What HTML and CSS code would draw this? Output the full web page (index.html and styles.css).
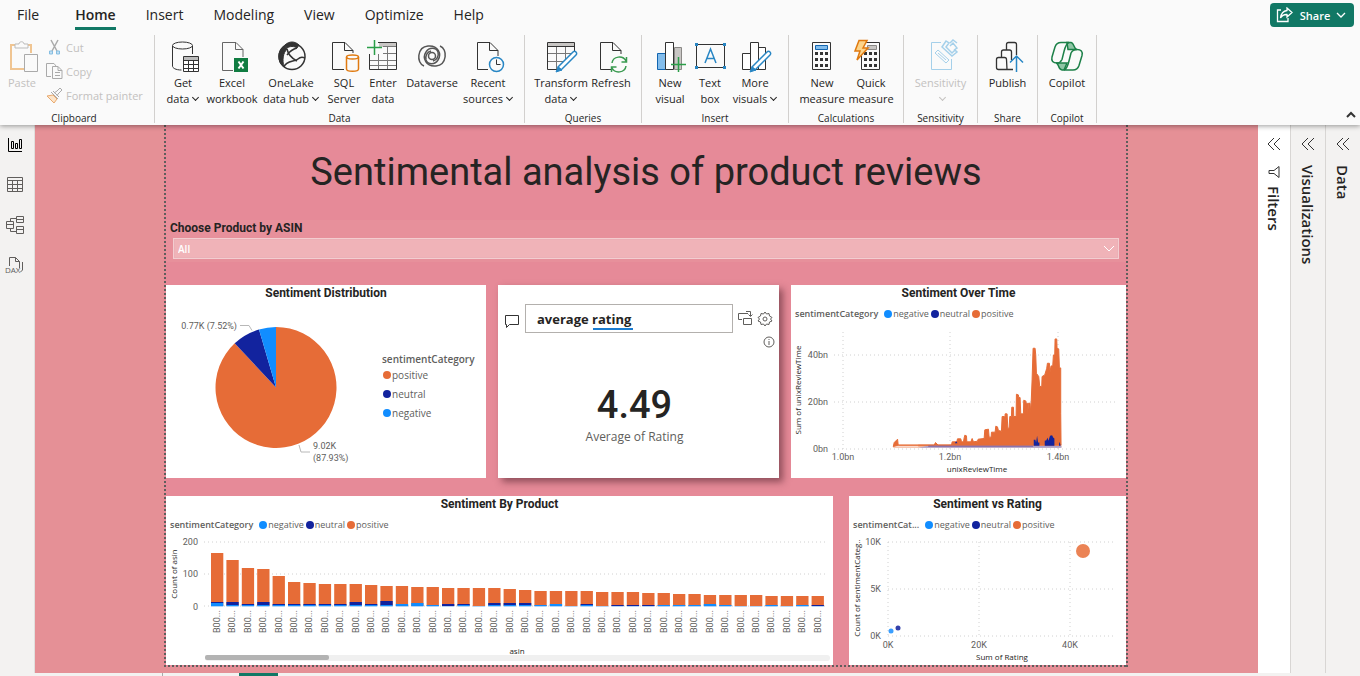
FILE: index.html
```html
<!DOCTYPE html>
<html lang="en">
<head>
<meta charset="utf-8">
<title>Sentimental analysis of product reviews</title>
<link rel="stylesheet" href="styles.css">
</head>
<body>
<header class="ribbon">
  <div class="tabbar">
    <nav class="tabs">
      <a href="#">File</a><a href="#" class="active">Home</a><a href="#">Insert</a><a href="#">Modeling</a><a href="#">View</a><a href="#">Optimize</a><a href="#">Help</a>
    </nav>
    <button class="share">
      <svg width="18" height="16" viewBox="0 0 18 16"><path d="M5 3H1.500v11.500H12V11"/><path d="M11 1l5 4.500-5 4.500V7.500C8 7.300 6 8.500 4.500 11 5 7 7.500 4 11 3.500z"/></svg>
      <span>Share</span>
      <svg width="10" height="8" viewBox="0 0 10 8"><path d="M1 2l4 4 4-4"/></svg>
    </button>
  </div>
  <div class="groups">
    <section class="group clipboard">
      <div class="tools">
        <button class="tool" disabled>
          <svg class="ico" viewBox="0 0 36 32"><path d="M14 4H7v24h13M21 4h6v8" stroke="#f0c592" stroke-width="2"/><path d="M11 7V3h4c0-3 5-3 5 0h4v4z" fill="#fafafa" stroke="#bbb"/><path d="M20.500 13.500h13v17h-13z" stroke="#aaa"/></svg>
          <span>Paste</span>
        </button>
        <div class="minis">
          <button disabled><svg width="17" height="17" viewBox="0 0 17 17"><path d="M5 1l6 11M12 1L6 12" stroke="#aaa" stroke-width="1.500"/><path d="M3.500 12h3v3h-3zM10.500 12h3v3h-3z" fill="#c5e0f2" stroke="#85bee2"/></svg>Cut</button>
          <button disabled><svg width="17" height="17" viewBox="0 0 17 17"><path d="M5 13.500H.5V.5H8L10 3M6.500 3.500H12l4 4v8H6.500zM12 3.500v4h4M9 9.500h5M9 12.500h5" stroke="#aaa"/></svg>Copy</button>
          <button disabled><svg width="17" height="17" viewBox="0 0 17 17"><path d="M1 9l6-1 4 4-3 4z" fill="#fde4c8" stroke="#e8a96e"/><path d="M5 5l7 7M7 4l6 6M8 6l3-2 3-3 2 2-4 4-1 2" stroke="#aaa"/></svg>Format painter</button>
        </div>
      </div>
      <h2>Clipboard</h2>
    </section>

    <section class="group data">
      <div class="tools">
        <button class="tool"><svg class="ico" viewBox="0 0 36 32"><path d="M7.500 5v20c0 2 3 4 9 4M27.500 5v8"/><ellipse cx="17.500" cy="4.500" rx="10" ry="3.500"/><path d="M18.500 15.500h15v15h-15z" fill="#fff"/><path d="M19 16h14v3H19z" fill="#bbb" stroke="none"/><path d="M18.500 19.500h15M18.500 23.500h15M18.500 27.500h15M23.500 19v12M28.500 19v12"/></svg><span>Get<br>data<i class="chev"></i></span></button>
        <button class="tool"><svg class="ico" viewBox="0 0 36 32"><path d="M19 29.500H8.500v-28H22l7 7V16M21.500 1.500v7H29" stroke="#666"/><path d="M20 17h14v14H20z" fill="#107c41" stroke="none"/><path d="M24.500 20.500l5 7M29.500 20.500l-5 7" stroke="#fff" stroke-width="2"/></svg><span>Excel<br>workbook</span></button>
        <button class="tool"><svg class="ico" viewBox="0 0 36 32"><circle cx="19" cy="15.500" r="13" stroke-width="1.500"/><path d="M12 5C4 9 4 21 11 26 9 19 10 12 14 8zM12 4c4-4 10-4 14 0l-2 3c-3-2-7-2-10 0z" fill="#333"/><path d="M14 8c1 5 4 9 10 12M24 7c-4 1-7 3-10 7M11 26c2-7 11-5 14-8M25 18c2-2 5-2 7-1" stroke-width="1.500"/></svg><span>OneLake<br>data hub<i class="chev"></i></span></button>
        <button class="tool"><svg class="ico" viewBox="0 0 36 32"><path d="M18 28.500H6.500v-27H19l8 8V12M18.500 1.500v8H27"/><path d="M20.500 16v12c0 3 12 3 12 0V16" fill="#fafafa" stroke="#e07a10" stroke-width="1.500"/><ellipse cx="26.500" cy="16" rx="6" ry="2" stroke="#e07a10" stroke-width="1.500"/></svg><span>SQL<br>Server</span></button>
        <button class="tool"><svg class="ico" viewBox="0 0 36 32"><path d="M14 2h18v4H14z" fill="#c8c6c4" stroke="none"/><path d="M13 1.500h18.500v27h-27V13"/><path d="M18 5.500h13M18 12.500h13M5 19.500h26M5 24.500h26M13.500 13v15M22.500 6v22" stroke="#777"/><path d="M2 6.500h15M9.500-1v15" stroke="#2b9e48" stroke-width="1.500"/></svg><span>Enter<br>data</span></button>
        <button class="tool"><svg class="ico" viewBox="0 0 36 32"><g stroke="#555" stroke-width="1.500"><circle cx="18" cy="15" r="3.500"/><path d="M10 25C2 22 3 6 14 5c10-1 14 8 10 14-3 5-10 5-12 0-1-4 1-8 5-9"/><path d="M26 5c8 3 7 19-4 20-10 1-14-8-10-14 3-5 10-5 12 0 1 4-1 8-5 9"/></g></svg><span>Dataverse</span></button>
        <button class="tool"><svg class="ico" viewBox="0 0 36 32"><path d="M18 28.500H7.500v-27H20l8 8V15M19.500 1.500v8H28"/><circle cx="26.500" cy="23.500" r="7" fill="#fafafa" stroke="#2886c4" stroke-width="1.500"/><path d="M26.500 18.500v5h4"/></svg><span>Recent<br>sources<i class="chev"></i></span></button>
      </div>
      <h2>Data</h2>
    </section>

    <section class="group queries">
      <div class="tools">
        <button class="tool"><svg class="ico" viewBox="0 0 36 32"><path d="M5 2h27v4H5z" fill="#c8c6c4" stroke="none"/><path d="M31.500 10V1.500h-27v27h12M4.500 5.500h27"/><path d="M5 12.500h24M5 20.500h16M13.500 6v22M22.500 6v12" stroke="#777"/><path d="M15 26L30 11c2-2 5 1 3 3L18 29z" fill="#fff" stroke="#2886c4" stroke-width="1.500"/><path d="M15 26l4 3-6 2z" fill="#2886c4" stroke="#2886c4"/></svg><span>Transform<br>data<i class="chev"></i></span></button>
        <button class="tool"><svg class="ico" viewBox="0 0 36 32"><path d="M18 28.500H7.500v-27H20l8 8V13M19.500 1.500v8H28"/><path d="M19 22c1-7 11-8 14-2M33.500 16v5h-5M33 25c-1 7-11 8-14 2M18.500 31v-5h5" stroke="#3a9a50" stroke-width="1.500"/></svg><span>Refresh</span></button>
      </div>
      <h2>Queries</h2>
    </section>

    <section class="group insert">
      <div class="tools">
        <button class="tool"><svg class="ico" viewBox="0 0 36 32"><path d="M5.500 12.500h8v16h-8z" fill="#83bdec" stroke="#1265b0"/><path d="M22.500 6.500h7v22h-7z" fill="#c8c6c4" stroke="#8a8886"/><path d="M13.500 1.500h8v27h-8z" fill="#fff"/><path d="M19 23.500h15M26.500 16v15" stroke="#2b9e48" stroke-width="1.500"/></svg><span>New<br>visual</span></button>
        <button class="tool"><svg class="ico" viewBox="0 0 36 32"><path d="M4.500 3.500h28v23h-28z"/><path d="M3 2h3v3H3zM31 2h3v3h-3zM3 25h3v3H3zM31 25h3v3h-3z" fill="#2886c4" stroke="none"/><path d="M13 22l5.500-14L24 22M15 17.500h7" stroke="#2886c4" stroke-width="1.500"/></svg><span>Text<br>box</span></button>
        <button class="tool"><svg class="ico" viewBox="0 0 36 32"><path d="M5.500 12.500h8v16h-8zM13.500 1.500h8v27h-8zM21.500 6.500h7v22h-7z" fill="#fff"/><path d="M15 26L30 11c2-2 5 1 3 3L18 29z" fill="#fff" stroke="#2886c4" stroke-width="1.500"/><path d="M15 26l4 3-6 2z" fill="#2886c4" stroke="#2886c4"/></svg><span>More<br>visuals<i class="chev"></i></span></button>
      </div>
      <h2>Insert</h2>
    </section>

    <section class="group calc">
      <div class="tools">
        <button class="tool"><svg class="ico" viewBox="0 0 36 32"><path d="M8.500 1.500h18v27h-18z"/><path d="M11.500 4.500h12v4h-12z" fill="#83bdec" stroke="#1265b0"/><path d="M11 12.500h13M11 18.500h13M11 24.500h13" stroke-width="3" stroke-dasharray="3 2"/></svg><span>New<br>measure</span></button>
        <button class="tool"><svg class="ico" viewBox="0 0 36 32"><path d="M8.500 1.500h18v27h-18z"/><path d="M14.500 4.500h9v4h-9z" fill="#c8c6c4" stroke="#8a8886"/><path d="M11 12.500h13M11 18.500h13M11 24.500h13" stroke-width="3" stroke-dasharray="3 2"/><path d="M6-.5h8L10 7h5L4 19l3-9H2z" fill="#fcd48a" stroke="#e07a10" stroke-width="1.500"/></svg><span>Quick<br>measure</span></button>
      </div>
      <h2>Calculations</h2>
    </section>

    <section class="group sens">
      <div class="tools">
        <button class="tool" disabled><svg class="ico" viewBox="0 0 36 32"><g stroke="#a5d0ea"><path d="M18 1.500H8.500v27h20V18"/><path d="M12 12l3-3 11 10-3 3zM15 12l8 7"/><path d="M19 6l4-6 3 2-3 4 6 6 3-3 2 2-5 4zM27 2l3-3 4 3M27 5l3-3 4 5-3 2" stroke-width="1.500"/></g></svg><span>Sensitivity<br><i class="chev"></i></span></button>
      </div>
      <h2>Sensitivity</h2>
    </section>
    <section class="group pub">
      <div class="tools">
        <button class="tool"><svg class="ico" viewBox="0 0 36 32"><path d="M17 28.500H8.500q-2 0-2-2v-8q0-2 2-2h6q2 0 2 2zM11.500 16v-5q0-2 2-2h6q2 0 2 2v8M16.500 9V3.500q0-2 2-2h6q2 0 2 2V14M17 28.500h6" stroke-width="1.300"/><path d="M26.500 31V15M20 21.500l6.500-6.500 6.500 6.500" stroke="#2886c4" stroke-width="1.500"/></svg><span>Publish</span></button>
      </div>
      <h2>Share</h2>
    </section>
    <section class="group copilot">
      <div class="tools">
        <button class="tool"><svg class="ico" viewBox="0 0 36 32"><g stroke="#1c8048" stroke-width="1.500"><path d="M18 1.500h4c3 0 3 7 6 7h-9z" fill="#8fc6a6"/><path d="M9 22h9l-3 7h-2c-4 0-3-7-6-7z" fill="#8fc6a6"/><path d="M8 22c-4 0-6-2-5-6l3-10c1-3 3-4.500 6-4.500h8c-3 1-4 5-5 9l-2 8c-1 2-2 3.500-5 3.500z"/><path d="M28 8.500c4 0 6 2 5 6l-3 10c-1 3-3 4.500-6 4.500h-9c3-1 4-5 5-9l2-8c1-2 3-3.500 6-3.500z"/></g></svg><span>Copilot</span></button>
      </div>
      <h2>Copilot</h2>
    </section>
    <button class="collapse" aria-label="Collapse ribbon"><svg width="10" height="8" viewBox="0 0 10 8"><path d="M1 6l4-4 4 4" stroke-width="2"/></svg></button>
  </div>
</header>

<div class="workspace">
  <nav class="rail">
    <button aria-label="Report view" class="on"><svg width="20" height="20" viewBox="0 0 20 20"><path d="M3.500 4v13.500H17M6.500 7.500h2v7h-2zM10.500 9.500h2v5h-2zM14.500 5.500h2v9h-2z"/></svg></button>
    <button aria-label="Table view"><svg width="20" height="20" viewBox="0 0 20 20"><path d="M2.500 3.500h15v14h-15zM2.500 6.500h15M2.500 10.500h15M2.500 14.500h15M7.500 6.500v11M12.500 6.500v11"/></svg></button>
    <button aria-label="Model view"><svg width="20" height="20" viewBox="0 0 20 20"><path d="M1.500 7.500h7v7h-7zM1.500 10.500h7M11.500 2.500h7v6h-7zM11.500 5.500h7M11.500 12.500h7v7h-7zM11.500 15.500h7M5.500 7V4.500h6M5.500 15v2.500h6"/></svg></button>
    <button aria-label="DAX query view"><svg width="20" height="20" viewBox="0 0 20 20"><path d="M4.500 12V3.500h6l4 4V14M10.500 3.500v4h4M17.500 8v8l-2 2"/><text x="0" y="19">DAX</text></svg></button>
  </nav>

  <main class="canvas">
    <div class="page">
      <h1>Sentimental analysis of product reviews</h1>
      <div class="slicer">
        <label for="asin">Choose Product by ASIN</label>
        <div class="pick">
          <select id="asin"><option>All</option></select>
          <svg width="10" height="8" viewBox="0 0 10 8"><path d="M0 1l5 5 5-5"/></svg>
        </div>
      </div>

      <div class="row top">
        <article class="card">
          <h3>Sentiment Distribution</h3>
          <svg class="chart" viewBox="0 0 320 176">
            <path d="M110 85.500V25a60.500 60.500 0 1 1-41.300 16.300z" fill="#e66c37"/>
            <path d="M110 85.500L68.700 41.300A60.500 60.500 0 0 1 93 27.500z" fill="#12239e"/>
            <path d="M110 85.500L93 27.500A60.500 60.500 0 0 1 110 25z" fill="#118dff"/>
            <path d="M74 23.500h9l3 5M133 143l2 7h9" class="lead"/>
            <text class="din" x="71" y="27" text-anchor="end">0.77K (7.52%)</text>
            <text class="din" x="147" y="147">9.02K</text>
            <text class="din" x="147" y="159">(87.93%)</text>
            <text class="seg b" x="216" y="61">sentimentCategory</text>
            <circle cx="221" cy="73" r="4" fill="#e66c37"/><text class="seg" x="226" y="77">positive</text>
            <circle cx="221" cy="92" r="4" fill="#12239e"/><text class="seg" x="226" y="96">neutral</text>
            <circle cx="221" cy="111" r="4" fill="#118dff"/><text class="seg" x="226" y="115">negative</text>
          </svg>
        </article>

        <article class="card qna">
          <div class="ask">
            <svg width="16" height="16" viewBox="0 0 16 16"><path d="M1.500 2.500h13v9h-9l-3 3v-3h-1z"/></svg>
            <div class="field"><input type="text" value="average rating" aria-label="Ask a question about your data"><i></i></div>
            <button aria-label="Turn this result into a visual"><svg width="16" height="16" viewBox="0 0 16 16"><path d="M5 8.500H1.500v-6H11M6.500 7.500h8v6h-8zM9 .5h4.500V5M11.500 3.500l2 2 2-2"/></svg></button>
            <button aria-label="Settings"><svg width="16" height="16" viewBox="0 0 16 16"><circle cx="8" cy="8" r="2"/><path d="M8 1l1.500 2 2.500-.5.500 2.500 2.500 1.500L13.500 8 15 10l-2.500 1-.5 2.500-2.500-.5L8 15l-1.500-2-2.500.5-.5-2.500L1 10l1.500-2L1 6.500 3.500 5 4 2.500l2.500.5z"/></svg></button>
          </div>
          <button class="info" aria-label="Information"><svg width="12" height="12" viewBox="0 0 12 12"><circle cx="6" cy="6" r="5"/><path d="M6 5v4M6 3v1"/></svg></button>
          <div class="answer">
            <p class="big">4.49</p>
            <p class="cap">Average of Rating</p>
          </div>
        </article>

        <article class="card">
          <h3>Sentiment Over Time</h3>
          <ul class="legend"><li class="lt">sentimentCategory</li><li class="neg">negative</li><li class="neu">neutral</li><li class="pos">positive</li></ul>
          <svg class="chart" viewBox="0 0 335 152">
            <path class="grid" d="M43 30h284M43 77h284M43 124h284M52 7v117M159 7v117M267 7v117"/>
            <g transform="translate(-6 -45) scale(.333)">
              <path d="M325 500h75v-6h430v10H325z" fill="#f3b69b"/>
              <path d="M430 498h400v6H400z" fill="#a9a3cf"/>
              <path stroke="#e66c37" stroke-width="3" fill="#e66c37" d="M325 500L328 488 338 478 340 496H448L452 488 460 496H500L502 486H516L518 477H528L530 486H536L538 474 540 466 545 468 546 486H558L562 476 566 486 578 484 580 478 598 476 600 450 611 448 613 472H619L620 457H631L633 439 638 441 641 452 650 454 652 410H659L660 438 661 402H667L669 445H673L675 410H680L681 382H686L687 410H694L695 343 701 345 702 353H706L708 402H716L717 361 723 363 724 370H728L729 402 731 370H736L738 400 742 300 745 205H751L753 225 755 280 762 290 765 320H771L772 290 780 285 786 265 788 250H794L796 275 799 258H804L806 225H810L811 177H816L817 205 822 207 824 264H828V400L829 496H340z"/>
              <path fill="#12239e" d="M747 498v-18h5l2 8 3-20 3 20h4v10zM780 498v-15l5-2 3-8 3 10 5-15 6-2 4 8 3 2v22zM823 498v-12l4 8v4zM510 490l4-6 4 6z"/>
              <path d="M430 499H745" stroke="#7a5a9c" stroke-width="3"/>
            </g>
            <text class="din" x="37" y="33" text-anchor="end">40bn</text><text class="din" x="37" y="80" text-anchor="end">20bn</text><text class="din" x="37" y="127" text-anchor="end">0bn</text>
            <text class="din" x="52" y="135" text-anchor="middle">1.0bn</text><text class="din" x="159" y="135" text-anchor="middle">1.2bn</text><text class="din" x="267" y="135" text-anchor="middle">1.4bn</text>
            <text class="axis" x="186" y="147" text-anchor="middle">unixReviewTime</text>
            <text class="axis" transform="translate(10 65) rotate(-90)" text-anchor="middle">Sum of unixReviewTime</text>
          </svg>
        </article>
      </div>

      <div class="row bottom">
        <article class="card">
          <h3>Sentiment By Product</h3>
          <ul class="legend"><li class="lt">sentimentCategory</li><li class="neg">negative</li><li class="neu">neutral</li><li class="pos">positive</li></ul>
          <svg class="chart" viewBox="0 0 667 129">
            <path class="grid" d="M38 6h624M38 38h624M38 70h624"/>
            <g id="bars"></g>
            <text class="din" x="32" y="9" text-anchor="end">200</text><text class="din" x="32" y="41" text-anchor="end">100</text><text class="din" x="32" y="74" text-anchor="end">0</text>
            <text class="axis" transform="translate(11 38) rotate(-90)" text-anchor="middle">Count of asin</text>
            <text class="axis" x="351" y="118" text-anchor="middle">asin</text>
            <rect x="39" y="119" width="625" height="6" rx="3" fill="#f0f0f0"/><rect x="39" y="119" width="124" height="5" rx="2" fill="#b3b3b3"/>
          </svg>
        </article>

        <article class="card">
          <h3>Sentiment vs Rating</h3>
          <ul class="legend"><li class="lt">sentimentCat...</li><li class="neg">negative</li><li class="neu">neutral</li><li class="pos">positive</li></ul>
          <svg class="chart" viewBox="0 0 277 129">
            <path class="grid" d="M39 6h227M39 53h227M39 100h227M39 6v94M130 6v94M221 6v94"/>
            <circle cx="234" cy="15" r="7" fill="#eb8355"/><circle cx="42" cy="95" r="2.500" fill="#3b9fff"/><circle cx="49" cy="92" r="2.500" fill="#3341ab"/>
            <text class="din" x="32" y="9" text-anchor="end">10K</text><text class="din" x="32" y="56" text-anchor="end">5K</text><text class="din" x="32" y="103" text-anchor="end">0K</text>
            <text class="din" x="39" y="112" text-anchor="middle">0K</text><text class="din" x="130" y="112" text-anchor="middle">20K</text><text class="din" x="221" y="112" text-anchor="middle">40K</text>
            <text class="axis" x="153" y="124" text-anchor="middle">Sum of Rating</text>
            <text class="axis" transform="translate(11 52) rotate(-90)" text-anchor="middle">Count of sentimentCateg..</text>
          </svg>
        </article>
      </div>
    </div>
  </main>

  <aside class="pane filters"><button aria-label="Expand filters"><svg width="14" height="14" viewBox="0 0 14 14"><path d="M7 1L1 7l6 6M13 1L7 7l6 6"/></svg></button><svg class="funnel" width="12" height="12" viewBox="0 0 12 12"><path d="M.5 1h11L7.500 6v5h-3V6z"/></svg><h2>Filters</h2></aside>
  <aside class="pane"><button aria-label="Expand visualizations"><svg width="14" height="14" viewBox="0 0 14 14"><path d="M7 1L1 7l6 6M13 1L7 7l6 6"/></svg></button><h2>Visualizations</h2></aside>
  <aside class="pane"><button aria-label="Expand data"><svg width="14" height="14" viewBox="0 0 14 14"><path d="M7 1L1 7l6 6M13 1L7 7l6 6"/></svg></button><h2>Data</h2></aside>
</div>
<footer class="pages"><span class="nav"></span><span class="current"></span></footer>
<script src="script.js"></script>
</body>
</html>
```
FILE: styles.css
```css
* { box-sizing: border-box; }
body {
  margin: 0;
  min-height: 100vh;
  display: flex;
  flex-direction: column;
  font-family: "Open Sans", "Noto Sans", sans-serif;
  font-size: 12px;
  color: #252423;
  background: #f3f2f1;
}
h1, h2, h3, p, ul { margin: 0; padding: 0; font-weight: 400; }
button { font: inherit; color: inherit; background: none; border: 0; padding: 0; }
svg { fill: none; stroke: #333; flex: none; display: block; }

/* ribbon */
.ribbon {
  position: relative;
  background: #fafafa;
  box-shadow: 0 1px 5px rgba(0, 0, 0, .4);
  z-index: 2;
}
.tabbar { display: flex; justify-content: space-between; height: 35px; padding: 3px 6px 0 17px; }
.tabs { display: flex; gap: 30px; }
.tabs a {
  color: #252423;
  text-decoration: none;
  font-size: 14px;
  line-height: 24px;
  height: 27px;
}
.tabs a:first-child { margin-right: 6px; }
.tabs .active { font-weight: 600; border-bottom: 3px solid #117865; }
.share {
  display: flex;
  align-items: center;
  gap: 4px;
  width: 84px;
  height: 24px;
  padding: 0 8px 0 6px;
  border-radius: 4px;
  background: #117865;
  color: #fff;
}
.share svg { stroke: #fff; stroke-width: 1.3; }
.share span { flex: 1; text-align: center; font-size: 11px; font-weight: 600; }
.groups { display: flex; height: 90px; padding-bottom: 2px; }
.group {
  display: flex;
  flex-direction: column;
  justify-content: space-between;
  border-right: 1px solid #d2d0ce;
}
.group h2 { font-size: 10px; line-height: 12px; text-align: center; margin-bottom: -1px; }
.tools { display: grid; padding-top: 6px; font-size: 11px; }
.tool { display: flex; flex-direction: column; align-items: center; line-height: 16px; white-space: nowrap; }
.tool .ico { width: 36px; height: 32px; overflow: visible; margin-bottom: 2px; }
.tool:disabled, .minis button:disabled { color: #c3c1bf; }
.chev {
  display: inline-block;
  width: 5px;
  height: 5px;
  margin: 0 1px 3px 4px;
  border: solid currentColor;
  border-width: 0 1px 1px 0;
  transform: rotate(45deg);
}
.clipboard { width: 155px; }
.clipboard .tools { grid-template-columns: 44px 1fr; }
.clipboard h2 { padding-right: 6px; }
.minis { display: grid; grid-auto-rows: 24px; margin-top: -6px; }
.minis button { display: flex; align-items: center; gap: 3px; padding-left: 2px; white-space: nowrap; }
.data { width: 370px; }
.data .tools { grid-template-columns: 46px 52px 66px 40px 38px 60px 52px; padding-left: 5px; }
.queries { width: 117px; }
.queries .tools { grid-template-columns: 56px 44px; padding-left: 8px; }
.insert { width: 147px; }
.insert .tools { grid-template-columns: 38px 42px 48px; padding-left: 9px; }
.calc { width: 115px; }
.calc .tools { grid-template-columns: 48px 50px; padding-left: 9px; }
.sens { width: 74px; }
.pub { width: 60px; }
.copilot { width: 59px; }
.collapse { margin-left: auto; padding: 72px 4px 0 0; }

/* workspace */
.workspace { flex: 1; display: flex; }
.rail { width: 35px; padding: 9px 0 0 5px; display: flex; flex-direction: column; gap: 20px; border-right: 1px solid #e1dfdd; }
.rail button { width: 20px; height: 20px; }
.rail svg { stroke: #605e5c; }
.rail .on svg { stroke: #000; }
.rail text { font-size: 8px; fill: #605e5c; stroke: none; }
.canvas { flex: 1; display: grid; grid-template-columns: 129fr 964fr 130fr; align-items: start; padding-bottom: 6px; background: #e59096; }
.page {
  --dot: #605e5c 0 2px, transparent 2px 4px;
  grid-column: 2;
  padding: 0 2px 2px;
  background:
    repeating-linear-gradient(var(--dot)) left / 2px 100% no-repeat,
    repeating-linear-gradient(var(--dot)) right / 2px 100% no-repeat,
    repeating-linear-gradient(90deg, var(--dot)) bottom / 100% 2px no-repeat,
    #e68a98;
}
h1 { font-family: Roboto, sans-serif; font-size: 38px; line-height: 46px; padding: 24px 0 25px; text-align: center; white-space: nowrap; }
.slicer { background: #e7909b; padding: 0 7px 3px 4px; margin-bottom: 23px; }
.slicer label, .card h3 { display: block; font: 700 12px/16px Roboto, sans-serif; }
.slicer label { padding-bottom: 2px; }
.pick { display: grid; align-items: center; margin-left: 3px; }
.pick > * { grid-area: 1 / 1; }
.pick select {
  appearance: none;
  height: 21px;
  padding: 0 4px;
  border: 1px solid #f3cdd0;
  outline: 1px solid #ebb0b6;
  outline-offset: -2px;
  border-radius: 0;
  background: #f0b3b8;
  color: #fff;
  font: 600 10px "Open Sans", sans-serif;
}
.pick svg { justify-self: end; margin-right: 5px; stroke: #fff; pointer-events: none; }
.row { display: grid; }
.row.top { grid-template-columns: 320fr 281fr 335fr; gap: 12px; margin-bottom: 18px; }
.row.bottom { grid-template-columns: 667fr 277fr; gap: 16px; }
.card { background: #fff; min-width: 0; }
.card h3 { text-align: center; }
.chart { width: 100%; height: auto; stroke: none; margin-top: 1px; }
.legend { display: flex; align-items: center; height: 16px; margin-top: 5px; padding-left: 4px; list-style: none; font-size: 9px; line-height: 16px; color: #605e5c; white-space: nowrap; }
.legend + .chart { margin-top: 3px; }
.legend li { display: flex; align-items: center; margin-right: 2px; }
.legend .lt { font-weight: 600; margin-right: 6px; }
.legend li:not(.lt)::before { content: ""; width: 8px; height: 8px; border-radius: 50%; margin-right: 1px; background: #118dff; }
.legend li.neu:not(.lt)::before { background: #12239e; }
.legend li.pos:not(.lt)::before { background: #e66c37; }
.chart text { fill: #605e5c; }
.din { font: 9px Roboto, sans-serif; }
.seg { font: 10px "Open Sans", sans-serif; }
.seg.b { font-weight: 600; }
.axis { font: 8px "Open Sans", sans-serif; }
.chart .axis { fill: #252423; }
.grid { stroke: #d0d0d0; stroke-dasharray: 1 3; }
.lead { stroke: #b8b8b8; fill: none; }

.qna { display: flex; flex-direction: column; padding-top: 19px; box-shadow: 4px 4px 7px rgba(60, 20, 30, .5); }
.ask { display: flex; align-items: center; padding: 0 6px; gap: 4px; }
.ask > svg { margin: 4px 1px 0 0; }
.field { flex: 1; position: relative; }
.field input { display: block; width: 100%; height: 29px; padding: 0 12px 0 11px; border: 1px solid #b3b0ad; font: 700 13px "Open Sans", sans-serif; color: #252423; }
.field i { position: absolute; left: 68px; top: 24px; width: 40px; height: 2px; background: #1a7cd0; }
.ask button svg, .info svg { stroke: #605e5c; }
.info { align-self: flex-end; margin: 3px 4px 0 0; }
.answer { padding: 34px 8px 0 0; text-align: center; }
.big { font: 500 38px/46px Roboto, sans-serif; }
.cap { line-height: 18px; color: #605e5c; }

.pane { width: 35px; display: flex; flex-direction: column; align-items: center; padding-top: 12px; border-left: 1px solid #d8d6d4; }
.filters { width: 32px; background: #fff; border-left: 0; }
.pane h2 { writing-mode: vertical-rl; font-size: 15px; font-weight: 600; line-height: 20px; margin-top: 14px; }
.pane .funnel { margin-top: 15px; transform: rotate(90deg); }
.filters h2 { margin-top: 8px; }
.pages { display: flex; height: 3px; }
.pages .nav { width: 163px; border-right: 1px solid #aaa; }
.pages .current { width: 39px; margin-left: 76px; background: #117865; }
```
FILE: script.js
```js
// One entry per product: [total, neutral, negative] in chart pixels.
const products = [
  [53, 1, 3], [46, 3, 1], [38, 1, 1], [37, 3, 1], [30, 1, 1], [24, 1, 1], [23, 1, 1], [22, 1, 1], [22, 1, 1], [22, 3, 1],
  [21, 1, 1], [20, 4, 1], [20, 0, 2], [19, 0, 3], [19, 0, 1], [18, 2, 0], [18, 1, 1], [18, 0, 0], [18, 2, 1], [17, 2, 1],
  [16, 2, 1], [15, 0, 1], [15, 0, 2], [15, 0, 0], [15, 1, 1], [14, 0, 0], [14, 1, 0], [14, 1, 0], [13, 1, 0], [13, 0, 1],
  [12, 0, 1], [12, 0, 1], [11, 0, 2], [11, 0, 1], [11, 0, 0], [11, 0, 0], [10, 0, 1], [10, 0, 0], [10, 0, 1], [10, 1, 0]
];
const step = 15.4;
const base = 70;
let out = "";
products.forEach(([total, neutral, negative], i) => {
  const x = 45 + i * step;
  const bar = (top, h, color) => `<rect x="${x}" y="${top}" width="12.3" height="${h}" fill="${color}"/>`;
  out += bar(base - total, total, "#e66c37");
  out += bar(base - negative - neutral, neutral, "#12239e");
  out += bar(base - negative, negative, "#118dff");
  out += bar(base, 1, "#b5d3f3");
  out += `<text class="din" transform="translate(${x + 9} 97) rotate(-90)">B00...</text>`;
});
document.getElementById("bars").innerHTML = out;
```
